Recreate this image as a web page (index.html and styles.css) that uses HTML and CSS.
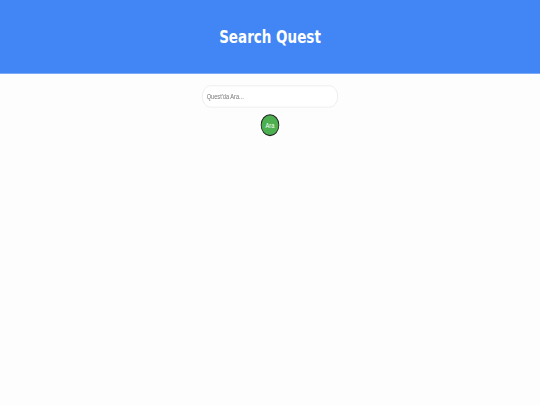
FILE: index.html
```html
<!DOCTYPE html>
<html lang="tr">
<head>
<meta charset="utf-8">
<title>Search Quest</title>
<link rel="stylesheet" href="styles.css">
</head>
<body>
<div class="frame">
  <div class="page">
    <header class="site-header">
      <h1 class="title">Search Quest</h1>
    </header>
    <main class="search">
      <form class="search-form">
        <input class="search-input" type="text" placeholder="Quest'da Ara...">
        <button class="search-button" type="submit">Ara</button>
      </form>
    </main>
  </div>
</div>
</body>
</html>
```

FILE: styles.css
```css
html, body {
  margin: 0;
  padding: 0;
  overflow: hidden;
  background: #fdfdfd;
}

.frame {
  width: 540px;
  height: 405px;
  overflow: hidden;
}

.page {
  width: 1280px;
  height: 720px;
  transform: scale(0.421875, 0.5625);
  transform-origin: 0 0;
  font-family: "DejaVu Sans", sans-serif;
}

.site-header {
  background: #4285f4;
  color: #ffffff;
  padding: 25px 0;
  text-align: center;
}

.title {
  margin: 0.67em 0;
  font-size: 32px;
  font-weight: bold;
}

.search-form {
  display: flex;
  flex-direction: column;
  align-items: center;
  gap: 12px;
  padding-top: 21px;
}

.search-input {
  width: 300px;
  padding: 11px 10px;
  font-family: "Liberation Sans", Arial, sans-serif;
  font-size: 13.33px;
  border: 1px solid #dddddd;
  border-radius: 20px;
  background: #ffffff;
  outline: none;
}

.search-input::placeholder {
  color: #757575;
}

.search-button {
  padding: 10px;
  font-family: "Liberation Sans", Arial, sans-serif;
  font-size: 13.33px;
  color: #ffffff;
  background: #4caf50;
  border: 2px solid #222222;
  border-radius: 50%;
}
```
